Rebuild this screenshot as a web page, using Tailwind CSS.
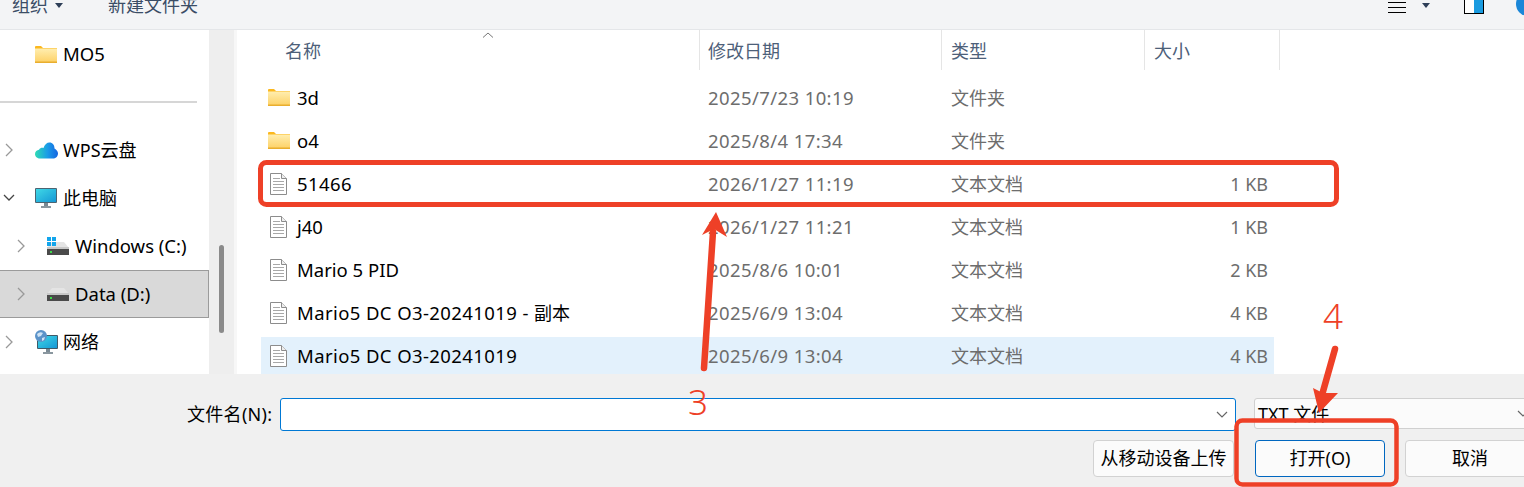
<!DOCTYPE html>
<html lang="zh-CN">

<head>
    <meta charset="UTF-8">
    <title>打开</title>
    <script src="https://cdn.jsdelivr.net/npm/@tailwindcss/browser@4"></script>
</head>

<body class="bg-white overflow-hidden">

    <!-- shared icons -->
    <svg class="absolute w-0 h-0">
        <defs>
            <linearGradient id="folderFill" x1="0" y1="0" x2="0" y2="1">
                <stop offset="0" stop-color="#ffeeb0" />
                <stop offset="1" stop-color="#fdd063" />
            </linearGradient>
            <linearGradient id="screenFill" x1="0" y1="0" x2="1" y2="1">
                <stop offset="0" stop-color="#3fd8e6" />
                <stop offset="1" stop-color="#1597d5" />
            </linearGradient>
            <linearGradient id="cloudFill" x1="0" y1="0" x2="1" y2="0">
                <stop offset="0" stop-color="#2edcb4" />
                <stop offset="0.55" stop-color="#1a9be8" />
                <stop offset="1" stop-color="#1565e0" />
            </linearGradient>
        </defs>
        <symbol id="folder" viewBox="0 0 22 17">
            <path d="M0 1a1 1 0 0 1 1-1h5l2 2h14v3H0z" fill="#fbb81f" />
            <rect x="0" y="2.500" width="22" height="14.500" fill="url(#folderFill)" />
            <rect x="0" y="15.500" width="22" height="1.500" fill="#e9ae2e" />
        </symbol>
        <symbol id="doc" viewBox="0 0 17 22">
            <path d="M.5.500h11l5 5v16H.5z" fill="#fff" stroke="#8c8c8c" />
            <path d="M11.500.500v5h5" fill="#eee" stroke="#8c8c8c" />
            <path d="M3 5.500h7M3 8.500h11M3 11.500h11M3 14.500h11M3 17.500h11" stroke="#a8a8a8" />
        </symbol>
        <symbol id="drive" viewBox="0 0 22 13">
            <path d="M5 0h12l5 6H0z" fill="#e4e4e4" />
            <rect x="0" y="6" width="22" height="7" fill="#4a4a4a" />
            <rect x="0" y="5" width="22" height="2" fill="#c8c8c8" />
            <rect x="3" y="9" width="2" height="2" fill="#3ddc4a" />
        </symbol>
        <symbol id="chevron" viewBox="0 0 8 14">
            <path d="M1 1l6 6-6 6" fill="none" stroke="#999" stroke-width="1.300" />
        </symbol>
    </svg>

    <div class="relative w-[1524px] h-[487px] overflow-hidden flex flex-col text-[18px] text-black font-['Noto_Sans','Noto_Sans_CJK_SC',sans-serif]">

        <!-- toolbar -->
        <div class="h-[30px] shrink-0 bg-[#f3f4f6] border-b border-[#e4e6e9] overflow-hidden">
            <div class="flex items-center h-[28px] -mt-[9px] pl-3 text-[#3b4d66] leading-[28px] whitespace-nowrap">
                <span class="shrink-0">组织</span>
                <span class="shrink-0 ml-[7px] border-x-[4px] border-x-transparent border-t-[5px] border-t-[#2e3f58]"></span>
                <span class="shrink-0 ml-[45px]">新建文件夹</span>
                <span class="shrink-0 ml-[1190px] mt-[4px] w-[18px] flex flex-col gap-[4px]">
                    <i class="block h-px bg-black"></i>
                    <i class="block h-px bg-black"></i>
                    <i class="block h-px bg-black"></i>
                </span>
                <span class="shrink-0 ml-[16px] border-x-[4px] border-x-transparent border-t-[5px] border-t-[#2e3f58]"></span>
                <span class="shrink-0 ml-[34px] -mt-[6px] w-[20px] h-[24px] flex border border-black bg-white">
                    <i class="block w-[10px]"></i>
                    <i class="block w-[9px] bg-[#1a9be0]"></i>
                </span>
                <span class="shrink-0 ml-[32px] -mt-[2px] w-[24px] h-[24px] rounded-full bg-[#1a86d8]"></span>
            </div>
        </div>

        <div class="flex h-[344px] shrink-0 overflow-hidden">

            <!-- navigation pane -->
            <div class="w-[209px] shrink-0">
                <div class="flex items-center h-[48px] pl-[35px]">
                    <svg class="w-[22px] h-[17px]"><use href="#folder" /></svg>
                    <span class="ml-[6px] text-[18.500px]">MO5</span>
                </div>
                <div class="flex items-center h-[48px]">
                    <div class="w-[197px] h-[2px] bg-[#d6d6d6]"></div>
                </div>
                <div class="flex items-center h-[48px] pl-[5px]">
                    <svg class="w-[8px] h-[14px]"><use href="#chevron" /></svg>
                    <svg class="ml-[22px] w-[23px] h-[17px]" viewBox="0 0 23 17">
                        <path d="M5 16.500C1.500 16.500 0 14 0 12C0 9.500 2 8 4 7.800C5 6 7 5.500 8.500 6C9.500 2.500 12 .5 14.500 .5C17.500 .5 19.500 3 19.500 6.500C21.500 7.500 23 9.500 23 11.500C23 14.500 20.500 16.500 18 16.500z" fill="url(#cloudFill)" />
                    </svg>
                    <span class="ml-[5px]">WPS云盘</span>
                </div>
                <div class="flex items-center h-[48px] pl-[3px]">
                    <svg class="w-[12px] h-[8px]" viewBox="0 0 12 8">
                        <path d="M1 1l5 5 5-5" fill="none" stroke="#444" stroke-width="1.300" />
                    </svg>
                    <svg class="ml-[20px] w-[22px] h-[20px]" viewBox="0 0 22 20">
                        <rect x="0" y="0" width="22" height="15" rx="1" fill="#4c6472" />
                        <rect x="1" y="1" width="20" height="13" fill="url(#screenFill)" />
                        <rect x="9" y="15" width="4" height="3" fill="#7a8a94" />
                        <rect x="6" y="18" width="10" height="2" fill="#8a979f" />
                    </svg>
                    <span class="ml-[6px]">此电脑</span>
                </div>
                <div class="flex items-center h-[48px] pl-[17px]">
                    <svg class="w-[8px] h-[14px]"><use href="#chevron" /></svg>
                    <span class="relative ml-[22px] w-[22px] h-[18px]">
                        <svg class="absolute left-0 bottom-0 w-[22px] h-[13px]"><use href="#drive" /></svg>
                        <svg class="absolute left-0 top-0 w-[9px] h-[9px]" viewBox="0 0 9 9">
                            <path d="M0 0h4v4H0zM5 0h4v4H5zM0 5h4v4H0zM5 5h4v4H5z" fill="#12a5ec" />
                        </svg>
                    </span>
                    <span class="ml-[6px] text-[18.500px]">Windows (C:)</span>
                </div>
                <div class="flex items-center h-[48px] pl-[17px] bg-[#d9d9d9] border-y border-r border-[#9b9b9b]">
                    <svg class="w-[8px] h-[14px]"><use href="#chevron" /></svg>
                    <svg class="ml-[22px] w-[22px] h-[13px]"><use href="#drive" /></svg>
                    <span class="ml-[6px] text-[18.500px]">Data (D:)</span>
                </div>
                <div class="flex items-center h-[48px] pl-[5px]">
                    <svg class="w-[8px] h-[14px]"><use href="#chevron" /></svg>
                    <svg class="ml-[21px] w-[24px] h-[24px]" viewBox="0 0 24 24">
                        <rect x="3" y="5" width="21" height="14" rx="1" fill="#3f5a68" />
                        <rect x="4" y="6" width="19" height="12" fill="url(#screenFill)" />
                        <rect x="12" y="19" width="4" height="3" fill="#7a8a94" />
                        <rect x="9" y="22" width="10" height="2" fill="#8a979f" />
                        <circle cx="7" cy="6" r="6" fill="#5b93c9" />
                        <path d="M3 4q3-3 6-1l-2 3-3 1zM8 8l3-1-1 3-2 1z" fill="#cfe3f4" />
                    </svg>
                    <span class="ml-[5px]">网络</span>
                </div>
            </div>

            <!-- pane scrollbar -->
            <div class="w-[25px] shrink-0 bg-[#eeeeee] pl-[10px] pt-[215px]">
                <div class="w-[5px] h-[88px] rounded-full bg-[#8a8a8a]"></div>
            </div>
            <div class="w-[3px] shrink-0 bg-[#f7f7f7]"></div>

            <!-- file list -->
            <div class="flex-1 min-w-0 relative">
                <div class="flex h-[40px] text-[#4d6079]">
                    <div class="w-[463px] pl-[48px] pt-[8px] border-r border-[#e5e5e5]">名称</div>
                    <div class="w-[242px] pl-[8px] pt-[8px] border-r border-[#e5e5e5]">修改日期</div>
                    <div class="w-[203px] pl-[9px] pt-[8px] border-r border-[#e5e5e5]">类型</div>
                    <div class="w-[135px] pl-[9px] pt-[8px] border-r border-[#e5e5e5]">大小</div>
                </div>
                <svg class="absolute left-[245px] top-[2px] w-[12px] h-[6px]" viewBox="0 0 12 6">
                    <path d="M1 5.500l5-4.500 5 4.500" fill="none" stroke="#777" />
                </svg>

                <div class="pt-[9px] ml-[24px] w-[1013px] flex flex-col gap-[6px] whitespace-nowrap">
                    <div class="flex items-center h-[37px]">
                        <svg class="ml-[7px] w-[22px] h-[17px]"><use href="#folder" /></svg>
                        <span class="ml-[7px] w-[411px] text-[18.500px]">3d</span>
                        <span class="w-[243px] text-[18.500px] tracking-[0.4px] text-[#6d6d6d]">2025/7/23 10:19</span>
                        <span class="pt-[2px] text-[#6d6d6d]">文件夹</span>
                    </div>
                    <div class="flex items-center h-[37px]">
                        <svg class="ml-[7px] w-[22px] h-[17px]"><use href="#folder" /></svg>
                        <span class="ml-[7px] w-[411px] text-[18.500px]">o4</span>
                        <span class="w-[243px] text-[18.500px] tracking-[0.4px] text-[#6d6d6d]">2025/8/4 17:34</span>
                        <span class="pt-[2px] text-[#6d6d6d]">文件夹</span>
                    </div>
                    <div class="flex items-center h-[37px]">
                        <svg class="ml-[9px] w-[17px] h-[22px]"><use href="#doc" /></svg>
                        <span class="ml-[10px] w-[411px] text-[18.500px] tracking-[0.4px]">51466</span>
                        <span class="w-[243px] text-[18.500px] tracking-[0.4px] text-[#6d6d6d]">2026/1/27 11:19</span>
                        <span class="pt-[2px] text-[#6d6d6d]">文本文档</span>
                        <span class="ml-auto mr-[6px] pt-[2px] text-[#6d6d6d]">1 KB</span>
                    </div>
                    <div class="flex items-center h-[37px]">
                        <svg class="ml-[9px] w-[17px] h-[22px]"><use href="#doc" /></svg>
                        <span class="ml-[10px] w-[411px] text-[18.500px]">j40</span>
                        <span class="w-[243px] text-[18.500px] tracking-[0.4px] text-[#6d6d6d]">2026/1/27 11:21</span>
                        <span class="pt-[2px] text-[#6d6d6d]">文本文档</span>
                        <span class="ml-auto mr-[6px] pt-[2px] text-[#6d6d6d]">1 KB</span>
                    </div>
                    <div class="flex items-center h-[37px]">
                        <svg class="ml-[9px] w-[17px] h-[22px]"><use href="#doc" /></svg>
                        <span class="ml-[10px] w-[411px] text-[18.500px]">Mario 5 PID</span>
                        <span class="w-[243px] text-[18.500px] tracking-[0.4px] text-[#6d6d6d]">2025/8/6 10:01</span>
                        <span class="pt-[2px] text-[#6d6d6d]">文本文档</span>
                        <span class="ml-auto mr-[6px] pt-[2px] text-[#6d6d6d]">2 KB</span>
                    </div>
                    <div class="flex items-center h-[37px]">
                        <svg class="ml-[9px] w-[17px] h-[22px]"><use href="#doc" /></svg>
                        <span class="ml-[10px] w-[411px] text-[18.500px] tracking-[0.4px]">Mario5 DC O3-20241019 - <span class="text-[18px] tracking-normal">副本</span></span>
                        <span class="w-[243px] text-[18.500px] tracking-[0.4px] text-[#6d6d6d]">2025/6/9 13:04</span>
                        <span class="pt-[2px] text-[#6d6d6d]">文本文档</span>
                        <span class="ml-auto mr-[6px] pt-[2px] text-[#6d6d6d]">4 KB</span>
                    </div>
                    <div class="flex items-center h-[37px] bg-[#e3f1fc]">
                        <svg class="ml-[9px] w-[17px] h-[22px]"><use href="#doc" /></svg>
                        <span class="ml-[10px] w-[411px] text-[18.500px] tracking-[0.4px]">Mario5 DC O3-20241019</span>
                        <span class="w-[243px] text-[18.500px] tracking-[0.4px] text-[#6d6d6d]">2025/6/9 13:04</span>
                        <span class="pt-[2px] text-[#6d6d6d]">文本文档</span>
                        <span class="ml-auto mr-[6px] pt-[2px] text-[#6d6d6d]">4 KB</span>
                    </div>
                </div>
            </div>
        </div>

        <!-- footer -->
        <div class="h-[113px] shrink-0 bg-[#f0f0f0] pt-[24px] whitespace-nowrap">
            <div class="flex items-center h-[33px]">
                <span class="shrink-0 ml-[187px] w-[93px] tracking-[0.3px]">文件名(N):</span>
                <div class="shrink-0 w-[956px] h-[33px] flex items-center justify-end pr-[7px] bg-white border border-[#0078d4] rounded-[3px]">
                    <svg class="w-[12px] h-[7px]" viewBox="0 0 12 7">
                        <path d="M1 1l5 5 5-5" fill="none" stroke="#666" stroke-width="1.200" />
                    </svg>
                </div>
                <div class="ml-[18px] w-[290px] h-[31px] shrink-0 self-start flex items-center justify-between pl-[3px] pr-[14px] bg-[#fbfbfb] border border-[#d0d0d0] rounded-[3px]">
                    <span class="pt-[2px]">TXT 文件</span>
                    <svg class="w-[12px] h-[7px]" viewBox="0 0 12 7">
                        <path d="M1 1l5 5 5-5" fill="none" stroke="#666" stroke-width="1.200" />
                    </svg>
                </div>
            </div>
            <div class="flex h-[37px] mt-[9px] pl-[1093px]">
                <div class="w-[141px] shrink-0 flex items-center justify-center bg-[#fbfbfb] border border-[#d2d2d2] rounded-[4px]">从移动设备上传</div>
                <div class="ml-[21px] w-[130px] shrink-0 flex items-center justify-center bg-[#fbfbfb] border border-[#0067c0] rounded-[4px]">打开(O)</div>
                <div class="ml-[20px] w-[130px] shrink-0 flex items-center justify-center bg-[#fbfbfb] border border-[#d2d2d2] rounded-[4px]">取消</div>
            </div>
        </div>

        <!-- annotations drawn on top of the screenshot -->
        <svg class="absolute inset-0 w-[1524px] h-[487px] pointer-events-none" viewBox="0 0 1524 487">
            <rect x="260.500" y="162.500" width="1076" height="42" rx="6" fill="none" stroke="#ee4027" stroke-width="5" />
            <rect x="1236.500" y="420.500" width="160" height="64" rx="6" fill="none" stroke="#ee4027" stroke-width="4.500" />
            <path d="M704 368L713 232" stroke="#ee4027" stroke-width="6.500" stroke-linecap="round" fill="none" />
            <path d="M716 212L727 237L714 229L702 235z" fill="#ee4027" />
            <path d="M1335 349L1322 395" stroke="#ee4027" stroke-width="6.500" stroke-linecap="round" fill="none" />
            <path d="M1319 413L1313 388L1323 393L1338 393z" fill="#ee4027" />
        </svg>
        <span class="absolute left-[688px] top-[378px] text-[35px] leading-[48px] text-[#ee4027] font-light">3</span>
        <span class="absolute left-[1323px] top-[292px] text-[35px] leading-[48px] text-[#ee4027] font-light">4</span>
    </div>

</body>

</html>
